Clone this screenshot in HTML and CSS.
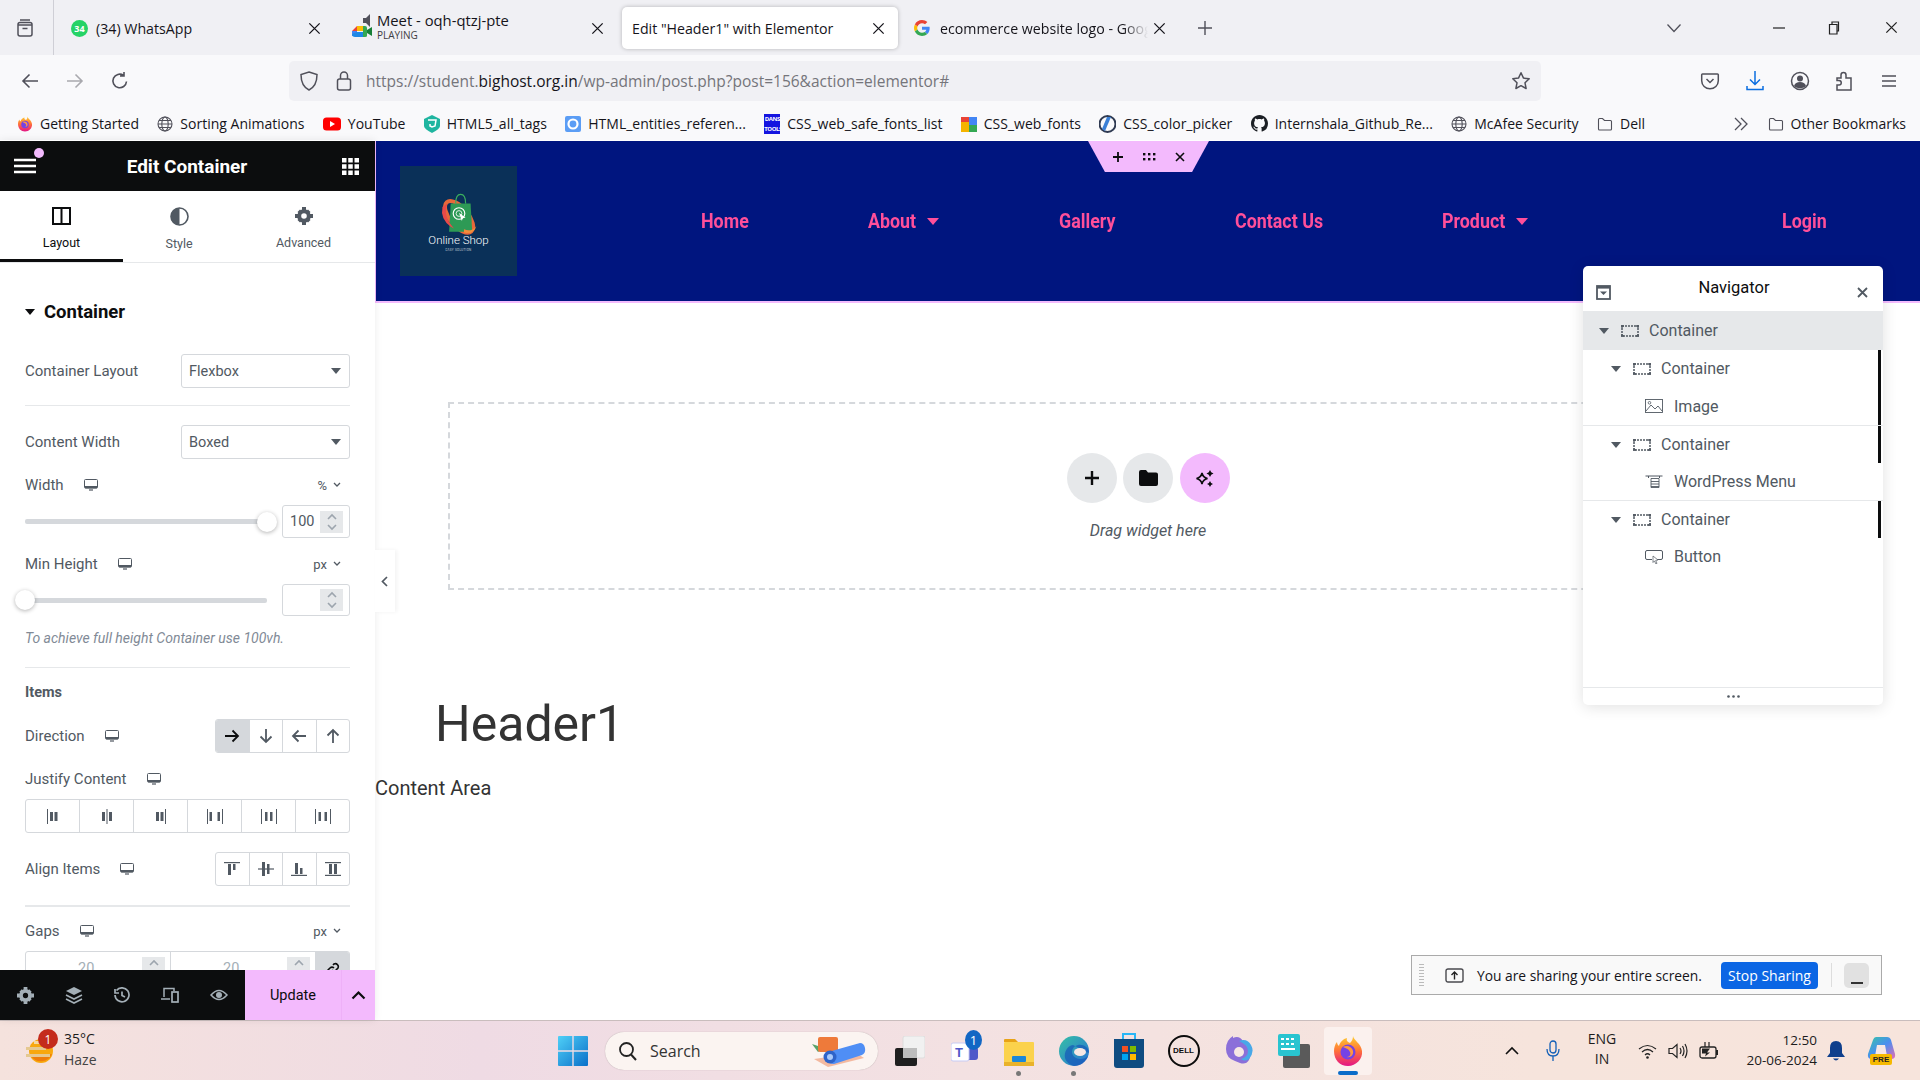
FILE: index.html
```html
<!DOCTYPE html>
<html lang="en">
<head>
<meta charset="utf-8">
<title>Edit "Header1" with Elementor</title>
<link rel="stylesheet" href="styles.css">
</head>
<body>
<svg class="defs" width="0" height="0">
  <symbol id="x" viewBox="0 0 16 16"><path d="M2.5 2.5l11 11M13.5 2.5l-11 11" fill="none" stroke="currentColor" stroke-width="1.4"/></symbol>
  <symbol id="globe" viewBox="0 0 16 16"><g fill="none" stroke="#50505a" stroke-width="1.1"><circle cx="8" cy="8" r="7"/><ellipse cx="8" cy="8" rx="3.2" ry="7"/><path d="M1 8h14M2 4.5h12M2 11.5h12"/></g></symbol>
  <symbol id="folder" viewBox="0 0 16 16"><path d="M1.5 13V3.5q0-1 1-1h3l2 2h6q1 0 1 1V13q0 1-1 1h-11q-1 0-1-1z" fill="none" stroke="#50505a" stroke-width="1.1"/></symbol>
  <symbol id="desk" viewBox="0 0 14 12"><rect x=".5" y=".5" width="13" height="8.6" rx="1" fill="none" stroke="#515962"/><rect x="1" y="7" width="12" height="2.2" fill="#515962"/><rect x="5" y="10.4" width="4" height="1.2" fill="#515962"/></symbol>
  <symbol id="ctr" viewBox="0 0 18 12"><rect x="1" y="1" width="16" height="10" fill="none" stroke="#515962" stroke-width="1.500" stroke-dasharray="2 1"/><path d="M0 1h3M15 1h3M0 11h3M15 11h3M1 0v3M17 0v3M1 12V9M17 12V9" stroke="#515962" stroke-width="1.300"/></symbol>
  <symbol id="ff" viewBox="0 0 32 32"><defs><linearGradient id="ffg" x1="0" y1="0" x2="0" y2="1"><stop offset="0" stop-color="#ffcf2e"/><stop offset=".5" stop-color="#ff7139"/><stop offset="1" stop-color="#e31587"/></linearGradient></defs><path d="M21 1c1 5 8 7 9 15 1 8-6 15-14 15S2 25 2 16c0-3 1-7 3-9 0 2 1 3 2 4 1-4 4-7 8-8-1 3 1 4 3 5 2-2 3-4 3-7z" fill="url(#ffg)"/><circle cx="16" cy="17" r="7.5" fill="#7542e5"/><path d="M11 12c3-2 9-1 10 4 1 4-3 7-6 6 3 0 4-3 3-5-1-3-5-4-7-5z" fill="#ff9640"/></symbol>
</svg>

<header class="tabbar">
  <div class="tb-view"><svg width="20" height="20" viewBox="0 0 20 20"><path d="M5 2h10M3 7h14M7.5 10.5h5" fill="none" stroke="#50505a" stroke-width="1.6"/><rect x="3" y="4.500" width="14" height="13.500" rx="2" fill="none" stroke="#50505a" stroke-width="1.5"/></svg></div>
  <div class="tab tab-wa">
    <span class="wa-ic">34</span><span class="tab-t">(34) WhatsApp</span>
    <svg class="tab-x"><use href="#x"/></svg>
  </div>
  <div class="tab tab-meet">
    <svg class="meet-ic" width="24" height="28" viewBox="0 0 24 28"><path d="M2 18l5-5h6v5H7v5H2z" fill="#ea4335"/><path d="M2 18h5v5H2z" fill="#4285f4"/><path d="M7 23h6v5H5q-3 0-3-3z" fill="#1e88e5" transform="translate(0 -4)"/><path d="M13 13h2q2 0 2 2v8q0 1-2 1h-2z" fill="#34a853"/><path d="M7 13h6v5H7z" fill="#fbbc04"/><path d="M17 17l5-3v9l-5-3z" fill="#188038"/><path d="M13 5h3l4-4v13l-4-4h-3z" fill="#50505a"/></svg>
    <div class="meet-t"><span class="tab-t meet-name">Meet - oqh-qtzj-pte</span><span class="playing">PLAYING</span></div>
    <svg class="tab-x"><use href="#x"/></svg>
  </div>
  <div class="tab tab-active">
    <span class="tab-t">Edit "Header1" with Elementor</span>
    <svg class="tab-x"><use href="#x"/></svg>
  </div>
  <div class="tab tab-g">
    <svg width="16" height="16" viewBox="0 0 48 48"><path fill="#ea4335" d="M24 9.5c3.5 0 6.700 1.200 9.200 3.600l6.900-6.900C35.900 2.400 30.500 0 24 0 14.600 0 6.500 5.400 2.600 13.200l8 6.200C12.500 13.700 17.800 9.500 24 9.500z"/><path fill="#4285f4" d="M47 24.500c0-1.600-.2-3.100-.4-4.500H24v9h13c-.6 3-2.300 5.500-4.800 7.200l7.700 6C44.400 38 47 31.800 47 24.500z"/><path fill="#fbbc05" d="M10.500 28.600c-.5-1.500-.8-3-.8-4.600s.3-3.100.8-4.600l-8-6.200C.9 16.500 0 20.100 0 24s.9 7.500 2.600 10.800z"/><path fill="#34a853" d="M24 48c6.500 0 11.900-2.100 15.900-5.800l-7.700-6c-2.200 1.400-4.900 2.300-8.200 2.300-6.200 0-11.500-4.200-13.400-9.900l-8 6.200C6.500 42.600 14.600 48 24 48z"/></svg>
    <span class="tab-t tab-fade">ecommerce website logo - Google</span>
    <svg class="tab-x"><use href="#x"/></svg>
  </div>
  <svg class="tab-plus" width="16" height="16" viewBox="0 0 16 16"><path d="M8 1v14M1 8h14" stroke="#50505a" stroke-width="1.4"/></svg>
  <svg class="tab-list" width="16" height="16" viewBox="0 0 16 16"><path d="M1.500 4.500L8 11.500l6.500-7" fill="none" stroke="#50505a" stroke-width="1.3"/></svg>
  <div class="win-btns">
    <svg width="14" height="14" viewBox="0 0 14 14"><path d="M1 7h12" stroke="#222" stroke-width="1.200"/></svg>
    <svg width="14" height="14" viewBox="0 0 14 14"><path d="M4 3V1h6.500v9H9M1.500 3.500H9V13H1.500z" fill="none" stroke="#222" stroke-width="1.200"/></svg>
    <svg width="15" height="15" viewBox="0 0 16 16"><use href="#x" color="#222"/></svg>
  </div>
</header>

<nav class="toolbar">
  <svg class="nb nb-back" width="20" height="20" viewBox="0 0 20 20"><path d="M18 10H3M9.500 3.500L3 10l6.500 6.500" fill="none" stroke="#50505a" stroke-width="1.600"/></svg>
  <svg class="nb nb-fwd" width="20" height="20" viewBox="0 0 20 20"><path d="M2 10h15M10.500 3.500L17 10l-6.500 6.500" fill="none" stroke="#a9a9ae" stroke-width="1.600"/></svg>
  <svg class="nb nb-rel" width="20" height="20" viewBox="0 0 20 20"><path d="M16.500 10.500a6.800 6.800 0 1 1-3-6.200M14 1v4h-4" fill="none" stroke="#50505a" stroke-width="1.600"/></svg>
  <div class="urlbar">
    <svg width="20" height="22" viewBox="0 0 20 22"><path d="M10 2l8 2.500c0 7-2 12.500-8 15.500C4 17 2 11.500 2 4.500z" fill="none" stroke="#50505a" stroke-width="1.500"/></svg>
    <svg class="lock" width="16" height="22" viewBox="0 0 16 22"><rect x="1.500" y="9" width="13" height="11" rx="2" fill="none" stroke="#50505a" stroke-width="1.500"/><path d="M4.500 9V5.500a3.500 3.500 0 0 1 7 0V9" fill="none" stroke="#50505a" stroke-width="1.500"/></svg>
    <span class="url">https://student.<b>bighost.org.in</b>/wp-admin/post.php?post=156&amp;action=elementor#</span>
    <svg class="star" width="20" height="20" viewBox="0 0 20 20"><path d="M10 1.800l2.500 5.300 5.700.7-4.200 4 1.100 5.700-5.100-2.800-5.100 2.800 1.100-5.700-4.200-4 5.700-.7z" fill="none" stroke="#50505a" stroke-width="1.500" stroke-linejoin="round"/></svg>
  </div>
  <div class="tb-right">
    <svg width="20" height="20" viewBox="0 0 20 20"><path d="M2.500 3h15q.8 0 .8.800v6a8.300 8 0 0 1-16.600 0v-6q0-.8.800-.8z" fill="none" stroke="#50505a" stroke-width="1.500"/><path d="M6.500 8l3.500 3.500L13.500 8" fill="none" stroke="#50505a" stroke-width="1.500"/></svg>
    <svg width="20" height="22" viewBox="0 0 20 22"><path d="M10 1v13M5 9.500l5 5 5-5" fill="none" stroke="#0b6ee0" stroke-width="1.500"/><path d="M2 16v3.500h16V16" fill="none" stroke="#0b6ee0" stroke-width="1.500"/></svg>
    <svg width="20" height="20" viewBox="0 0 20 20"><circle cx="10" cy="10" r="8.500" fill="none" stroke="#50505a" stroke-width="1.500"/><circle cx="10" cy="7.500" r="3" fill="#50505a"/><path d="M4 15c1-3 3-4 6-4s5 1 6 4c-3 3-9 3-12 0z" fill="#50505a"/></svg>
    <svg width="20" height="22" viewBox="0 0 20 22"><path d="M2 8h4V5a2.500 2.500 0 0 1 5 0v3h5v12H2v-5h2a2.200 2.200 0 0 0 0-4.500H2z" fill="none" stroke="#50505a" stroke-width="1.500"/></svg>
    <svg width="18" height="18" viewBox="0 0 18 18"><path d="M2 4h14M2 9h14M2 14h14" stroke="#50505a" stroke-width="1.500"/></svg>
  </div>
</nav>

<nav class="bookmarks">
  <span class="bm"><svg width="16" height="16"><use href="#ff"/></svg>Getting Started</span>
  <span class="bm"><svg width="16" height="16"><use href="#globe"/></svg>Sorting Animations</span>
  <span class="bm"><svg width="18" height="16" viewBox="0 0 18 16"><rect y="1.500" width="18" height="13" rx="3.500" fill="#f00"/><path d="M7 5l5 3-5 3z" fill="#fff"/></svg>YouTube</span>
  <span class="bm"><svg width="16" height="18" viewBox="0 0 16 18"><path d="M8 0l8 4v7q0 3-8 7-8-4-8-7V4z" fill="#1fb5a0"/><path d="M4 5h8l-1 6-3 1-2-1V9" fill="none" stroke="#fff" stroke-width="1.500"/></svg>HTML5_all_tags</span>
  <span class="bm"><svg width="16" height="16" viewBox="0 0 16 16"><rect width="16" height="16" rx="2" fill="#5b9df5"/><circle cx="8" cy="8" r="4.500" fill="none" stroke="#fff" stroke-width="2.200"/></svg>HTML_entities_referen...</span>
  <span class="bm"><span class="dans">DANS<br>TOOLS</span>CSS_web_safe_fonts_list</span>
  <span class="bm"><svg width="16" height="16" viewBox="0 0 16 16"><rect x="0" y="5" width="8" height="11" fill="#f4b400"/><rect x="0" y="1" width="8" height="5" fill="#ea4335"/><rect x="8" y="1" width="8" height="8" fill="#4285f4"/><rect x="8" y="9" width="8" height="7" fill="#34a853"/></svg>CSS_web_fonts</span>
  <span class="bm"><svg width="17" height="18" viewBox="0 0 17 18"><circle cx="8.500" cy="9" r="8" fill="none" stroke="#2f3a52" stroke-width="2"/><path d="M12 2L6 16l-3-2 5-12z" fill="#3a7fd6"/></svg>CSS_color_picker</span>
  <span class="bm"><svg width="17" height="17" viewBox="0 0 16 16"><path fill="#1b1f24" d="M8 0C3.580 0 0 3.580 0 8c0 3.540 2.290 6.530 5.470 7.590.4.070.55-.17.55-.38 0-.19-.01-.82-.01-1.490-2.010.37-2.530-.49-2.690-.94-.09-.23-.48-.94-.82-1.130-.28-.15-.68-.52-.01-.53.630-.01 1.080.58 1.230.82.720 1.210 1.870.87 2.330.66.070-.52.280-.87.510-1.070-1.780-.2-3.640-.89-3.640-3.950 0-.87.310-1.590.82-2.150-.08-.2-.36-1.020.08-2.120 0 0 .67-.21 2.200.82.640-.18 1.320-.27 2-.27s1.360.09 2 .27c1.530-1.040 2.200-.82 2.200-.82.440 1.100.16 1.920.08 2.120.51.560.82 1.270.82 2.150 0 3.070-1.870 3.750-3.650 3.950.290.250.54.730.54 1.480 0 1.070-.01 1.930-.01 2.200 0 .21.150.46.550.38A8.010 8.010 0 0 0 16 8c0-4.420-3.580-8-8-8z"/></svg>Internshala_Github_Re...</span>
  <span class="bm"><svg width="16" height="16"><use href="#globe"/></svg>McAfee Security</span>
  <span class="bm"><svg width="16" height="16"><use href="#folder"/></svg>Dell</span>
  <svg class="bm-more" width="16" height="14" viewBox="0 0 16 14"><path d="M2 1l6 6-6 6M8 1l6 6-6 6" fill="none" stroke="#50505a" stroke-width="1.300"/></svg>
  <span class="bm"><svg width="16" height="16"><use href="#folder"/></svg>Other Bookmarks</span>
</nav>

<main class="app">
  <aside class="panel">
    <div class="p-head">
      <span class="dot"></span>
      <svg width="22" height="16" viewBox="0 0 22 16"><path d="M0 2h22M0 8h22M0 14h22" stroke="#fff" stroke-width="2.600"/></svg>
      <h1>Edit Container</h1>
      <svg width="17" height="17" viewBox="0 0 17 17" fill="#fff"><rect width="4.500" height="4.500"/><rect x="6.250" width="4.500" height="4.500"/><rect x="12.500" width="4.500" height="4.500"/><rect y="6.250" width="4.500" height="4.500"/><rect x="6.250" y="6.250" width="4.500" height="4.500"/><rect x="12.500" y="6.250" width="4.500" height="4.500"/><rect y="12.500" width="4.500" height="4.500"/><rect x="6.250" y="12.500" width="4.500" height="4.500"/><rect x="12.500" y="12.500" width="4.500" height="4.500"/></svg>
    </div>
    <div class="p-tabs">
      <div class="p-tab p-tab-on">
        <svg width="19" height="18" viewBox="0 0 19 18"><path d="M1 1h17v16H1zM9.500 1v16" fill="none" stroke="#0c0d0e" stroke-width="2"/></svg>
        <span>Layout</span>
      </div>
      <div class="p-tab p-tab-style">
        <svg width="19" height="19" viewBox="0 0 19 19"><circle cx="9.500" cy="9.500" r="8.500" fill="none" stroke="#515962" stroke-width="1.600"/><path d="M9.500 1a8.500 8.500 0 0 0 0 17z" fill="#515962"/></svg>
        <span>Style</span>
      </div>
      <div class="p-tab p-tab-adv">
        <svg width="18" height="18" viewBox="0 0 18 18"><circle cx="9" cy="9" r="4.800" fill="none" stroke="#515962" stroke-width="4"/><path d="M7 0h4v3H7zM7 15h4v3H7zM0 7h3v4H0zM15 7h3v4h-3zM2.500 5l2.500-2.500 2 2L4.500 7zM13 15.500L15.500 13l-2-2L11 13.500zM2.500 13L5 15.500l2-2L4.500 11zM13 2.500L15.500 5l-2 2L11 4.500z" fill="#515962"/></svg>
        <span>Advanced</span>
      </div>
    </div>
    <div class="p-body">
      <div class="sec-title"><i class="caret caret-k"></i>Container</div>

      <div class="row r-sel1"><label>Container Layout</label><div class="select">Flexbox<i class="caret"></i></div></div>
      <hr class="sep sep1">
      <div class="row r-sel2"><label>Content Width</label><div class="select">Boxed<i class="caret"></i></div></div>

      <div class="row r-lab"><label>Width</label><svg class="desk"><use href="#desk"/></svg><span class="unit">%<svg width="8" height="6" viewBox="0 0 8 6"><path d="M1 1l3 3 3-3" fill="none" stroke="#515962" stroke-width="1.300"/></svg></span></div>
      <div class="row r-slide">
        <div class="track"><span class="thumb thumb-end"></span></div>
        <div class="num"><span>100</span><span class="spin"><svg width="12" height="18" viewBox="0 0 12 18"><path d="M2 6l4-4 4 4M2 12l4 4 4-4" fill="none" stroke="#9da5ae" stroke-width="1.600"/></svg></span></div>
      </div>

      <div class="row r-lab"><label>Min Height</label><svg class="desk"><use href="#desk"/></svg><span class="unit">px<svg width="8" height="6" viewBox="0 0 8 6"><path d="M1 1l3 3 3-3" fill="none" stroke="#515962" stroke-width="1.300"/></svg></span></div>
      <div class="row r-slide r-slide2">
        <div class="track"><span class="thumb thumb-start"></span></div>
        <div class="num"><span></span><span class="spin"><svg width="12" height="18" viewBox="0 0 12 18"><path d="M2 6l4-4 4 4M2 12l4 4 4-4" fill="none" stroke="#9da5ae" stroke-width="1.600"/></svg></span></div>
      </div>
      <p class="hint">To achieve full height Container use 100vh.</p>
      <hr class="sep sep2">
      <div class="items">Items</div>

      <div class="row r-dir"><label>Direction</label><svg class="desk"><use href="#desk"/></svg>
        <div class="btns">
          <span class="on"><svg width="16" height="14" viewBox="0 0 16 14"><path d="M1 7h13M8.500 1.500L14 7l-5.500 5.500" fill="none" stroke="#0c0d0e" stroke-width="1.800"/></svg></span>
          <span><svg width="14" height="16" viewBox="0 0 14 16"><path d="M7 1v13M1.500 8.500L7 14l5.500-5.500" fill="none" stroke="#515962" stroke-width="1.800"/></svg></span>
          <span><svg width="16" height="14" viewBox="0 0 16 14"><path d="M15 7H2M7.500 1.500L2 7l5.500 5.500" fill="none" stroke="#515962" stroke-width="1.800"/></svg></span>
          <span><svg width="14" height="16" viewBox="0 0 14 16"><path d="M7 15V2M1.500 7.500L7 2l5.500 5.500" fill="none" stroke="#515962" stroke-width="1.800"/></svg></span>
        </div>
      </div>
      <div class="row r-lab"><label>Justify Content</label><svg class="desk"><use href="#desk"/></svg></div>
      <div class="btns btns-wide">
        <span><svg width="18" height="15" viewBox="0 0 18 15" fill="#515962"><rect x="3" width="1" height="15"/><rect x="6" y="3" width="3" height="9"/><rect x="10.500" y="3" width="3" height="9"/></svg></span>
        <span><svg width="18" height="15" viewBox="0 0 18 15" fill="#515962"><rect x="4" y="3" width="3" height="9"/><rect x="8.500" width="1" height="15"/><rect x="11" y="3" width="3" height="9"/></svg></span>
        <span><svg width="18" height="15" viewBox="0 0 18 15" fill="#515962"><rect x="4" y="3" width="3" height="9"/><rect x="8.500" y="3" width="3" height="9"/><rect x="13" width="1" height="15"/></svg></span>
        <span><svg width="18" height="15" viewBox="0 0 18 15" fill="#515962"><rect x="1" width="1" height="15"/><rect x="3.500" y="3" width="2.500" height="9"/><rect x="11.500" y="3" width="2.500" height="9"/><rect x="16" width="1" height="15"/></svg></span>
        <span><svg width="18" height="15" viewBox="0 0 18 15" fill="#515962"><rect x="1" width="1" height="15"/><rect x="5" y="3" width="2.500" height="9"/><rect x="10" y="3" width="2.500" height="9"/><rect x="16" width="1" height="15"/></svg></span>
        <span><svg width="18" height="15" viewBox="0 0 18 15" fill="#515962"><rect x="1" width="1" height="15"/><rect x="4.500" y="3" width="2.500" height="9"/><rect x="10.500" y="3" width="2.500" height="9"/><rect x="16" width="1" height="15"/></svg></span>
      </div>
      <div class="row r-align"><label>Align Items</label><svg class="desk"><use href="#desk"/></svg>
        <div class="btns">
          <span><svg width="16" height="14" viewBox="0 0 16 14" fill="#515962"><rect width="16" height="1.200"/><rect x="4" y="2" width="3" height="11"/><rect x="9" y="2" width="2.500" height="6"/></svg></span>
          <span><svg width="16" height="14" viewBox="0 0 16 14" fill="#515962"><rect y="6.400" width="16" height="1.200"/><rect x="4" width="3" height="14"/><rect x="9" y="2" width="2.500" height="10"/></svg></span>
          <span><svg width="16" height="14" viewBox="0 0 16 14" fill="#515962"><rect y="12.800" width="16" height="1.200"/><rect x="4" y="1" width="3" height="11"/><rect x="9" y="6" width="2.500" height="6"/></svg></span>
          <span><svg width="16" height="14" viewBox="0 0 16 14" fill="#515962"><rect width="16" height="1.200"/><rect y="12.800" width="16" height="1.200"/><rect x="4" y="2" width="3" height="10"/><rect x="9" y="2" width="3" height="10"/></svg></span>
        </div>
      </div>
      <hr class="sep sep3">
      <div class="row r-lab r-gaps"><label>Gaps</label><svg class="desk"><use href="#desk"/></svg><span class="unit">px<svg width="8" height="6" viewBox="0 0 8 6"><path d="M1 1l3 3 3-3" fill="none" stroke="#515962" stroke-width="1.300"/></svg></span></div>
      <div class="gaps">
        <div class="gap"><span>20</span><i class="mini"><svg width="12" height="8" viewBox="0 0 12 8"><path d="M2 6l4-4 4 4" fill="none" stroke="#9da5ae" stroke-width="1.600"/></svg></i></div>
        <div class="gap"><span>20</span><i class="mini"><svg width="12" height="8" viewBox="0 0 12 8"><path d="M2 6l4-4 4 4" fill="none" stroke="#9da5ae" stroke-width="1.600"/></svg></i></div>
        <div class="link"><svg width="14" height="14" viewBox="0 0 14 14"><path d="M6 8a3 3 0 0 0 4 0l2-2a3 3 0 0 0-4-4L7 3M8 6a3 3 0 0 0-4 0l-2 2a3 3 0 0 0 4 4l1-1" fill="none" stroke="#0c0d0e" stroke-width="1.600"/></svg></div>
      </div>
    </div>
    <div class="p-foot">
      <div class="f-ics">
        <svg width="17" height="17" viewBox="0 0 18 18"><circle cx="9" cy="9" r="4.800" fill="none" stroke="#a4afb7" stroke-width="4"/><path d="M7 0h4v3H7zM7 15h4v3H7zM0 7h3v4H0zM15 7h3v4h-3zM2.500 5l2.500-2.500 2 2L4.500 7zM13 15.500L15.500 13l-2-2L11 13.500zM2.500 13L5 15.500l2-2L4.500 11zM13 2.500L15.500 5l-2 2L11 4.500z" fill="#a4afb7"/></svg>
        <svg width="18" height="18" viewBox="0 0 18 18"><path d="M9 1l8 4-8 4-8-4z" fill="#a4afb7"/><path d="M1 9l8 4 8-4M1 13l8 4 8-4" fill="none" stroke="#a4afb7" stroke-width="1.600"/></svg>
        <svg width="16" height="16" viewBox="0 0 16 16"><path d="M2.500 3.500A7 7 0 1 1 1 8M1 2v4h4" fill="none" stroke="#a4afb7" stroke-width="1.700"/><path d="M8 4.500V8.500l3 1.500" fill="none" stroke="#a4afb7" stroke-width="1.700"/></svg>
        <svg width="18" height="16" viewBox="0 0 18 16"><path d="M3 10V1.500h10V4M0 12h9" fill="none" stroke="#a4afb7" stroke-width="1.500"/><rect x="11" y="5" width="6" height="10" fill="none" stroke="#a4afb7" stroke-width="1.700"/></svg>
        <svg width="18" height="12" viewBox="0 0 18 12"><path d="M1 6q8-9 16 0-8 9-16 0z" fill="none" stroke="#a4afb7" stroke-width="1.500"/><circle cx="9" cy="6" r="3" fill="#a4afb7"/></svg>
      </div>
      <div class="f-up">Update</div>
      <div class="f-ar"><svg width="15" height="10" viewBox="0 0 15 10"><path d="M1.500 8.500l6-6 6 6" fill="none" stroke="#0c0d0e" stroke-width="2.200"/></svg></div>
    </div>
    <div class="collapse"><svg width="7" height="11" viewBox="0 0 7 11"><path d="M6 1L1.500 5.500 6 10" fill="none" stroke="#515962" stroke-width="1.700"/></svg></div>
  </aside>

  <section class="canvas">
    <div class="site-head">
      <div class="handle">
        <svg width="12" height="12" viewBox="0 0 12 12"><path d="M6 1v10M1 6h10" stroke="#0c0d0e" stroke-width="1.800"/></svg>
        <svg width="14" height="10" viewBox="0 0 14 10" fill="#0c0d0e"><rect x="1" y="1" width="2.400" height="2.400"/><rect x="6" y="1" width="2.400" height="2.400"/><rect x="11" y="1" width="2.400" height="2.400"/><rect x="1" y="6" width="2.400" height="2.400"/><rect x="6" y="6" width="2.400" height="2.400"/><rect x="11" y="6" width="2.400" height="2.400"/></svg>
        <svg width="12" height="12" viewBox="0 0 12 12"><path d="M2 2l8 8M10 2l-8 8" stroke="#0c0d0e" stroke-width="1.600"/></svg>
      </div>
      <div class="logo">
        <svg width="40" height="43" viewBox="0 0 48 52">
          <ellipse cx="24" cy="30" rx="23" ry="11" transform="rotate(50 24 30)" fill="none" stroke="#e8683a" stroke-width="5"/>
          <path d="M14 14h24l2 34H12z" fill="#2d9a55"/><path d="M20 14q0-11 6-11t6 11" fill="none" stroke="#3aaf5e" stroke-width="1.500"/>
          <path d="M4 18q-3 14 10 24l4 2q-14-14-8-30z" fill="#e84a4a"/><path d="M30 49q12 3 15-8-6 8-15 4z" fill="#f28c3a"/>
          <circle cx="24" cy="26" r="7" fill="none" stroke="#fff" stroke-width="1.400"/><circle cx="24" cy="26" r="3.500" fill="none" stroke="#fff"/><path d="M24 25l8 6-3.500.5-1 3.500z" fill="#fff"/>
        </svg>
        <span class="logo-a">Online Shop</span>
        <span class="logo-b">EASY SOLUTION</span>
      </div>
      <ul class="menu">
        <li><span class="mt w47">Home</span></li>
        <li><span class="mt w48">About</span><i class="m-caret"></i></li>
        <li><span class="mt w56">Gallery</span></li>
        <li><span class="mt w87">Contact Us</span></li>
        <li><span class="mt w63">Product</span><i class="m-caret"></i></li>
      </ul>
      <span class="mt w47 login">Login</span>
    </div>

    <div class="drop">
      <div class="drop-btns">
        <span class="circ"><svg width="16" height="16" viewBox="0 0 16 16"><path d="M8 1v14M1 8h14" stroke="#0c0d0e" stroke-width="2.400"/></svg></span>
        <span class="circ"><svg width="19" height="16" viewBox="0 0 19 16"><path d="M0 2q0-2 2-2h5l2 2.500h8q2 0 2 2V14q0 2-2 2H2q-2 0-2-2z" fill="#0c0d0e"/></svg></span>
        <span class="circ circ-ai"><svg width="19" height="19" viewBox="0 0 19 19"><path d="M7 4q1 4.500 5.500 5.500Q8 10.500 7 15q-1-4.500-5.500-5.500Q6 8.500 7 4z" fill="none" stroke="#0c0d0e" stroke-width="1.600"/><path d="M15 1l1.200 2.300L18.500 4.500 16.200 5.700 15 8l-1.200-2.300L11.500 4.500l2.300-1.200zM15 12l1.100 2 1.900 1-1.900 1.100L15 18l-1.100-1.900L12 15l1.900-1z" fill="#0c0d0e"/></svg></span>
      </div>
      <div class="drag">Drag widget here</div>
    </div>

    <h2 class="h1">Header1</h2>
    <p class="content-area">Content Area</p>

    <div class="navigator">
      <div class="nv-head">
        <svg width="15" height="15" viewBox="0 0 15 15"><rect x="1" y="1" width="13" height="13" fill="none" stroke="#515962" stroke-width="1.800"/><rect x="1" y="1" width="13" height="2.600" fill="#515962"/><path d="M4 6.500h7l-3.500 3.500z" fill="#515962"/></svg>
        <span class="nv-title">Navigator</span>
        <svg width="11" height="11" viewBox="0 0 11 11"><path d="M1 1l9 9M10 1l-9 9" stroke="#515962" stroke-width="1.800"/></svg>
      </div>
      <div class="nv-row nv-top"><i class="caret"></i><svg class="nv-ic"><use href="#ctr"/></svg>Container</div>
      <div class="nv-group nv-g1">
        <div class="nv-row"><i class="caret"></i><svg class="nv-ic"><use href="#ctr"/></svg>Container</div>
        <div class="nv-row nv-leaf"><svg class="nv-lic" viewBox="0 0 18 14"><rect x=".5" y=".5" width="17" height="13" fill="none" stroke="#515962" stroke-width=".9"/><path d="M1 12l5-6 4 4 3-3 4 5" fill="none" stroke="#515962" stroke-width=".9"/><circle cx="4.500" cy="3.800" r="1.300" fill="none" stroke="#515962" stroke-width=".8"/></svg>Image</div>
      </div>
      <div class="nv-group nv-g2">
        <div class="nv-row"><i class="caret"></i><svg class="nv-ic"><use href="#ctr"/></svg>Container</div>
        <div class="nv-row nv-leaf"><svg class="nv-lic" viewBox="0 0 18 14"><path d="M.5 1h17M3.500 1v2M14.500 1v2" stroke="#515962"/><path d="M6 3.500h8M6 6.500h8M6 9h8M6 11.500h8M6 3.500v9h8v-9" fill="none" stroke="#515962" stroke-width=".9"/></svg>WordPress Menu</div>
      </div>
      <div class="nv-group nv-g3">
        <div class="nv-row"><i class="caret"></i><svg class="nv-ic"><use href="#ctr"/></svg>Container</div>
        <div class="nv-row nv-leaf"><svg class="nv-lic" viewBox="0 0 18 14"><path d="M7 9.500H2q-1.500 0-1.500-1.500V2Q.5.500 2 .5h14q1.500 0 1.500 1.500v6q0 1.500-1.500 1.500h-4" fill="none" stroke="#515962"/><path d="M8 6l5 4-2.300.4 1.300 3-1.200.5-1.300-3L8 12.500z" fill="#fff" stroke="#515962" stroke-width=".7"/></svg>Button</div>
      </div>
      <div class="nv-foot"><svg width="13" height="3" viewBox="0 0 13 3" fill="#515962"><circle cx="1.500" cy="1.500" r="1.300"/><circle cx="6.500" cy="1.500" r="1.300"/><circle cx="11.500" cy="1.500" r="1.300"/></svg></div>
    </div>

    <div class="sharebar">
      <span class="grip"></span>
      <svg width="19" height="15" viewBox="0 0 19 15"><rect x="1" y="1" width="17" height="13" rx="2" fill="none" stroke="#4a4a4f" stroke-width="1.400"/><path d="M9.500 11.500V4.500M6.500 7l3-3 3 3" fill="none" stroke="#222" stroke-width="1.400"/></svg>
      <span class="share-t">You are sharing your entire screen.</span>
      <span class="stop">Stop Sharing</span>
      <span class="share-d"></span>
      <span class="share-min"><i></i></span>
    </div>
  </section>
</main>

<footer class="taskbar">
  <div class="weather">
    <svg width="28" height="30" viewBox="0 0 28 30"><circle cx="15" cy="15" r="12" fill="#f8a80e"/><path d="M5 20a12 12 0 0 0 21-2z" fill="#ef7d0c"/><rect x="0" y="11" width="20" height="3" fill="#e5c890"/><rect x="0" y="18" width="24" height="3" fill="#e5c890"/><rect x="8" y="5" width="12" height="3" fill="#f5d9a0"/></svg>
    <span class="badge">1</span>
    <div class="w-t"><span>35°C</span><span class="w-h">Haze</span></div>
  </div>
  <div class="tb-center">
    <svg class="win" width="30" height="30" viewBox="0 0 30 30"><defs><linearGradient id="wg" x1="0" y1="0" x2="1" y2="1"><stop offset="0" stop-color="#4fd0f7"/><stop offset="1" stop-color="#0a6fc9"/></linearGradient></defs><path d="M0 1q0-1 1-1h13.300v14.300H0zM15.700 0H29q1 0 1 1v13.300H15.700zM0 15.700h14.300V30H1q-1 0-1-1zM15.700 15.700H30V29q0 1-1 1H15.700z" fill="url(#wg)"/></svg>
    <div class="search">
      <svg width="20" height="20" viewBox="0 0 20 20"><circle cx="8.500" cy="8.500" r="6.500" fill="none" stroke="#222" stroke-width="1.800"/><path d="M13 13.500l5 5.500" stroke="#222" stroke-width="2"/></svg>
      <span>Search</span>
      <svg class="s-art" width="58" height="34" viewBox="0 0 58 34"><path d="M4 10l6 8 6-4z" fill="#59a36a"/><rect x="10" y="3" width="20" height="15" rx="2" fill="#ee7a3a"/><path d="M6 25l42-6 8 5-36 9z" fill="#f3b9a0"/><path d="M20 18l32-9q4 0 5 5t-3 7l-28 9q-6 0-7-5t1-7z" fill="#4f8ef5"/><circle cx="22" cy="23" r="6.500" fill="#2e63c9"/><circle cx="22" cy="23" r="3" fill="#a9c9fb"/></svg>
    </div>
    <svg class="tv" width="30" height="30" viewBox="0 0 30 30"><rect x="8" y="0" width="22" height="22" rx="2" fill="#f1f1f1" stroke="#ddd"/><rect x="0" y="12" width="22" height="18" rx="2" fill="#1f1f1f"/><rect x="8" y="12" width="14" height="10" fill="#bdbdbd"/></svg>
    <div class="app-ic teams"><svg width="28" height="26" viewBox="0 0 28 26"><circle cx="20" cy="6" r="4" fill="#7b83eb"/><rect x="12" y="9" width="15" height="13" rx="3" fill="#5059c9"/><rect x="0" y="5" width="18" height="18" rx="2" fill="#fff" stroke="#c8cbf4"/><text x="4" y="19" class="t-t">T</text></svg><span class="t-badge">1</span></div>
    <div class="app-ic"><svg width="30" height="30" viewBox="0 0 30 30"><path d="M0 4q0-1 1-1h10l3 3h-14z" fill="#e8a317"/><rect y="6" width="30" height="24" rx="1" fill="#fbd24c"/><rect y="26" width="30" height="4" fill="#e9b22a"/><rect x="8" y="20" width="14" height="6" rx="1" fill="#1a87d8"/></svg><u></u></div>
    <div class="app-ic"><svg width="30" height="30" viewBox="0 0 30 30"><defs><linearGradient id="eg" x1="0" y1="0" x2="1" y2="1"><stop offset="0" stop-color="#35c1a5"/><stop offset="1" stop-color="#2a6fd6"/></linearGradient></defs><circle cx="15" cy="15" r="15" fill="url(#eg)"/><path d="M30 17c0-6-6-9-11-8-4 1-6 4-6 7s3 7 8 7c4 0 6-1 8-3-2 6-8 10-13 10-4 0-9-4-10-8-1-6 2-12 8-13" fill="#1558b8" opacity=".7"/><ellipse cx="21" cy="16" rx="6" ry="4" fill="#f6e7e4"/></svg><u></u></div>
    <div class="app-ic"><svg width="30" height="36" viewBox="0 0 30 36"><path d="M9 6V1h12v5" fill="none" stroke="#29b6f6" stroke-width="2"/><path d="M0 6h30v26q0 3-3 3H3q-3 0-3-3z" fill="#0f4c81"/><rect x="8" y="13" width="6" height="6" fill="#f25022"/><rect x="16" y="13" width="6" height="6" fill="#7fba00"/><rect x="8" y="21" width="6" height="6" fill="#00a4ef"/><rect x="16" y="21" width="6" height="6" fill="#ffb900"/></svg></div>
    <div class="dell"><span>DELL</span></div>
    <div class="app-ic"><svg width="28" height="30" viewBox="0 0 28 30"><path d="M8 2q6-3 10 3l6 8q3 5 0 11-3 5-9 3l-5-2q-9-3-9-12t7-13z" fill="#8b6fd9"/><path d="M14 5q8-3 12 4t-2 14q-4 3-8 0 7-2 7-8t-9-10z" fill="#48a8e8"/><circle cx="14" cy="16" r="5" fill="#f6e7e4"/></svg></div>
    <div class="app-ic"><svg width="32" height="34" viewBox="0 0 32 34"><rect x="5" y="10" width="27" height="24" rx="2" fill="#5a5a5a"/><rect y="0" width="22" height="22" rx="2" fill="#29c4d0"/><g fill="#fff"><rect x="3" y="4" width="3" height="2"/><rect x="8" y="4" width="3" height="2"/><rect x="13" y="4" width="3" height="2"/><rect x="3" y="9" width="3" height="2"/><rect x="8" y="9" width="3" height="2"/><rect x="13" y="9" width="3" height="2"/><rect x="3" y="14" width="14" height="2"/></g></svg></div>
    <div class="app-ic ff-on"><svg width="32" height="32"><use href="#ff"/></svg><b></b></div>
  </div>
  <div class="tray">
    <svg class="tr-up" width="14" height="9" viewBox="0 0 14 9"><path d="M1 8l6-6 6 6" fill="none" stroke="#111" stroke-width="1.600"/></svg>
    <svg class="tr-mic" width="14" height="22" viewBox="0 0 14 22"><rect x="4" y="1" width="6" height="12" rx="3" fill="none" stroke="#1360b8" stroke-width="1.300"/><path d="M1 9q0 7 6 7t6-7M7 16v5" fill="none" stroke="#1360b8" stroke-width="1.300"/></svg>
    <div class="tr-lang"><span>ENG</span><span>IN</span></div>
    <svg class="tr-wifi" width="19" height="16" viewBox="0 0 19 16"><path d="M1 6q8.500-7 17 0M4 9q5.500-5 11 0M7 12q2.500-2.500 5 0" fill="none" stroke="#222" stroke-width="1.200"/><circle cx="9.500" cy="14.500" r="1.300" fill="#222"/></svg>
    <svg class="tr-vol" width="20" height="16" viewBox="0 0 20 16"><path d="M1 5.500h3.500L9 1.500v13l-4.500-4H1z" fill="none" stroke="#222" stroke-width="1.200"/><path d="M12 5q2 3 0 6M14.500 3q3 5 0 10M17 1q4 7 0 14" fill="none" stroke="#222" stroke-width="1.200"/></svg>
    <svg class="tr-bat" width="20" height="20" viewBox="0 0 20 20"><rect x="1" y="6" width="16" height="11" rx="2" fill="none" stroke="#222" stroke-width="1.300"/><rect x="17" y="9" width="2" height="5" fill="#222"/><path d="M3 7.500h8l-3 4h3l-5 4 1-3H3z" fill="#222"/><path d="M6 1v5M10 1v5" stroke="#222" stroke-width="1.200"/></svg>
    <div class="clock"><span>12:50</span><span>20-06-2024</span></div>
    <svg class="tr-bell" width="18" height="22" viewBox="0 0 18 22"><path d="M9 1q-6 0-6 7v5l-3 4h18l-3-4V8q0-7-6-7zM6 18.500q3 4 6 0z" fill="#0f3f8c"/></svg>
    <div class="copilot"><svg width="30" height="24" viewBox="0 0 30 24"><defs><linearGradient id="cg" x1="0" y1="0" x2="1" y2="1"><stop offset="0" stop-color="#36c5a5"/><stop offset=".5" stop-color="#4a8ef0"/><stop offset="1" stop-color="#e86bb5"/></linearGradient></defs><path d="M10 1h11q3 0 4 3l4 14q1 5-4 5H6q-5 0-4-5L7 4q1-3 3-3z" fill="url(#cg)"/><path d="M11 9h8l2 11H9z" fill="#f6e7e4"/></svg><span>PRE</span></div>
  </div>
</footer>
</body>
</html>
```
FILE: styles.css
```css
* { box-sizing: border-box; }
html, body { margin: 0; padding: 0; height: 100%; }
body {
  width: 1920px; height: 1080px; overflow: hidden;
  display: flex; flex-direction: column;
  font-family: Roboto, "Noto Sans", sans-serif; color: #515962; background: #fff;
}
.defs { position: absolute; }
svg { display: block; flex: none; }
i, u { display: block; text-decoration: none; }

/* tab strip */
.tabbar {
  height: 55px; flex: none; background: #f0f0f4; display: flex; align-items: center;
  font: 14.2px "Open Sans", "Noto Sans", sans-serif; color: #15141a;
}
.tb-view { width: 54px; height: 55px; padding: 18px 0 0 15px; position: relative; }
.tb-view::after { content: ""; position: absolute; left: 53px; top: 0; height: 55px; width: 1px; background: #cfcfd6; }
.tab { height: 42px; display: flex; align-items: center; flex: none; position: relative; padding-top: 1px; }
.tab-x { width: 15px; height: 15px; color: #15141a; position: absolute; right: 12px; top: 14px; }
.tab-wa { width: 279px; padding-left: 17px; }
.tab-wa .tab-x { right: 11px; }
.wa-ic {
  width: 17px; height: 17px; border-radius: 50%; background: #25d366; color: #fff;
  font-size: 9px; font-weight: 700; display: flex; align-items: center; justify-content: center; margin-right: 8px;
}
.tab-meet { width: 289px; padding-left: 17px; }
.tab-meet .tab-x { right: 17px; }
.meet-ic { margin-right: 3px; margin-top: -2px; }
.meet-t { display: flex; flex-direction: column; line-height: 17px; margin-top: -2px; }
.meet-name { font-size: 14.8px; }
.playing { font-size: 10px; line-height: 13px; color: #3e3e44; }
.tab-active { width: 276px; padding-left: 10px; background: #fff; border-radius: 5px; box-shadow: 0 0 4px rgba(0,0,0,.25); }
.tab-active .tab-t { white-space: nowrap; }
.tab-g { width: 279px; padding-left: 16px; overflow: hidden; }
.tab-g .tab-x { right: 10px; }
.tab-fade {
  margin-left: 10px; width: 208px; overflow: hidden; white-space: nowrap;
  -webkit-mask-image: linear-gradient(90deg, #000 88%, transparent); mask-image: linear-gradient(90deg, #000 88%, transparent);
}
.tab-plus { margin-left: 20px; }
.tab-list { margin-left: 453px; }
.win-btns { margin-left: auto; display: flex; gap: 42px; padding-right: 21px; align-items: center; }

/* nav toolbar */
.toolbar { height: 52px; flex: none; background: #f9f9fb; display: flex; align-items: center; padding-left: 20px; }
.nb { margin-right: 25px; }
.nb-rel { margin-right: 0; }
.urlbar {
  width: 1252px; height: 40px; margin-left: 159px;
  background: #f0f0f4; border-radius: 5px; display: flex; align-items: center; padding-left: 10px;
}
.lock { margin-left: 17px; }
.url { margin-left: 14px; font: 15.5px "Open Sans", "Noto Sans", sans-serif; color: #75757b; white-space: nowrap; }
.url b { font-weight: 400; color: #15141a; }
.star { margin-left: auto; margin-right: 10px; }
.tb-right { margin-left: 159px; display: flex; align-items: center; gap: 25px; }

/* bookmarks */
.bookmarks {
  height: 33px; flex: none; background: #f9f9fb; display: flex; align-items: center; padding: 0 14px 0 17px;
  font: 14px "Open Sans", "Noto Sans", sans-serif; color: #15141a; white-space: nowrap; gap: 18.4px;
}
.bm { display: flex; align-items: center; gap: 7px; }
.dans { width: 16px; height: 20px; background: #1414e0; color: #fff; font-size: 6px; line-height: 10px; font-weight: 700; display: block; text-align: center; overflow: hidden; letter-spacing: -.4px; }
.bm-more { margin-left: auto; }

/* app */
.app { height: 880px; flex: none; display: flex; position: relative; }
.panel {
  width: 375px; flex: none; display: flex; flex-direction: column; background: #fff; position: relative;
  box-shadow: 0 0 8px rgba(0,0,0,.08); z-index: 2;
}
.p-head {
  height: 50px; flex: none; margin-top: 1px; background: #0c0d0e; color: #fff; display: flex; align-items: center;
  justify-content: space-between; padding: 0 16px 0 14px; position: relative;
}
.p-head h1 { margin: 0; font-size: 19px; font-weight: 700; position: relative; left: -2px; }
.dot { position: absolute; left: 34px; top: 7px; width: 10px; height: 10px; border-radius: 50%; background: #f3bafd; }
.p-tabs { height: 72px; flex: none; display: flex; border-bottom: 1px solid #e6e8ea; font-size: 12.5px; }
.p-tab { display: flex; flex-direction: column; align-items: center; padding-top: 16px; gap: 10px; }
.p-tab-on { width: 123px; color: #0c0d0e; border-bottom: 3px solid #0c0d0e; height: 71px; }
.p-tab-style { width: 110px; margin-left: 1px; }
.p-tab-adv { width: 141px; padding-right: 2px; }

.p-body { flex: 1; min-height: 0; overflow: hidden; padding: 37px 25px 0; font-size: 15px; }
.sec-title { height: 24px; display: flex; align-items: center; gap: 9px; font-size: 18.5px; font-weight: 700; color: #0c0d0e; }
.caret { width: 0; height: 0; border: 5.5px solid transparent; border-top: 6px solid #515962; border-bottom: 0; flex: none; }
.caret-k { border-top-color: #0c0d0e; }
.row { display: flex; align-items: center; }
label { white-space: nowrap; }
.select {
  margin-left: auto; width: 169px; height: 34px; border: 1px solid #d5d8dc; border-radius: 3px; display: flex;
  align-items: center; justify-content: space-between; padding: 0 8px 0 7px; font-size: 14.5px;
}
.r-sel1 { margin-top: 30px; }
.r-sel2 { margin-top: 19px; }
.sep { border: 0; margin: 0; height: 1px; background: #e6e8ea; }
.sep1 { margin-top: 17px; }
.sep2 { margin-top: 19px; }
.sep3 { margin-top: 19px; height: 2px; }
.r-lab { height: 20px; margin-top: 16px; }
.desk { width: 14px; height: 12px; margin-left: 20px; }
.unit { margin-left: auto; font-size: 13px; display: flex; align-items: center; gap: 6px; padding-right: 9px; }
.r-slide { margin-top: 10px; height: 33px; justify-content: space-between; }
.r-slide2 { height: 32px; }
.track { width: 242px; height: 5px; background: #d5d8dc; border-radius: 2px; position: relative; }
.thumb {
  position: absolute; top: -7.500px; width: 20px; height: 20px; border-radius: 50%; background: #fff;
  box-shadow: 0 1px 4px rgba(0,0,0,.3);
}
.thumb-end { right: -10px; }
.thumb-start { left: -10px; }
.num {
  width: 68px; height: 100%; border: 1px solid #d5d8dc; border-radius: 3px; display: flex; align-items: center;
  justify-content: space-between; padding: 0 6px 0 7px; font-size: 14.500px;
}
.spin { width: 23px; height: 22px; background: #e6e8ea; display: flex; align-items: center; justify-content: center; }
.hint { margin: 12px 0 0; height: 20px; line-height: 20px; font-size: 14px; font-style: italic; color: #818a96; white-space: nowrap; }
.items { margin-top: 15px; height: 20px; line-height: 20px; font-size: 14.500px; font-weight: 700; }
.r-dir { margin-top: 16px; }
.r-align { margin-top: 19px; }
.btns {
  margin-left: auto; width: 135px; height: 34px; border: 1px solid #d5d8dc; border-radius: 3px; display: flex; overflow: hidden;
}
.btns span { flex: 1; display: flex; align-items: center; justify-content: center; border-left: 1px solid #d5d8dc; }
.btns span:first-child { border-left: 0; }
.btns span.on { background: #d5d8dc; }
.btns-wide { width: 325px; margin-top: 10px; }
.r-gaps { margin-top: 14px; }
.gaps {
  margin-top: 10px; height: 34px; display: flex; border: 1px solid #d5d8dc; border-radius: 3px; overflow: hidden;
  font-size: 14.500px; color: #a4afb7;
}
.gap { width: 145px; display: flex; justify-content: space-between; padding: 5px 5px 0 52px; border-right: 1px solid #d5d8dc; }
.gap span { margin-top: 3px; }
.mini { width: 23px; height: 22px; background: #e6e8ea; display: flex; justify-content: center; padding-top: 2px; }
.link { flex: 1; background: #d5d8dc; display: flex; justify-content: center; padding-top: 10px; }
.p-foot { height: 50px; flex: none; background: #0c0d0e; display: flex; }
.f-ics { width: 245px; display: flex; align-items: center; justify-content: space-around; padding: 0 1px; }
.f-up { width: 96px; background: #f3bafd; color: #0c0d0e; display: flex; align-items: center; justify-content: center; font-size: 14.500px; }
.f-ar { flex: 1; background: #f3bafd; border-left: 1px solid #eeb0f8; display: flex; align-items: center; justify-content: center; }
.collapse {
  position: absolute; left: 100%; top: 410px; width: 20px; height: 62px; background: #fff;
  box-shadow: 2px 0 4px rgba(0,0,0,.05); display: flex; align-items: center; padding-left: 6px;
}

/* canvas */
.canvas { flex: 1; min-width: 0; position: relative; background: #fff; }
.site-head {
  height: 162px; margin-top: 1px; background: #00157f; border: 0 solid #f3bafd; border-left-width: 1px; border-bottom-width: 2px;
  display: flex; align-items: center; padding-left: 24px; position: relative;
  font: 700 21px Roboto, sans-serif; color: #ff4f9a;
}
.handle {
  position: absolute; left: 712px; top: 0; width: 121px; height: 31px; background: #f3bafd;
  clip-path: polygon(0 0, 100% 0, 86% 100%, 14% 100%);
  display: flex; align-items: center; justify-content: center; gap: 18px;
}
.logo {
  width: 117px; height: 110px; background: #0a3058; display: flex; flex-direction: column; align-items: center;
  padding-top: 26px; color: #fff; font-weight: 300;
}
.logo-a { font-size: 11.500px; line-height: 14px; margin-top: -2px; }
.logo-b { font-size: 3px; line-height: 6px; letter-spacing: .3px; }
.menu { list-style: none; margin: 0 0 0 184px; padding: 0; display: flex; gap: 120px; }
.menu li { display: flex; align-items: center; }
.mt { display: block; white-space: nowrap; transform: scaleX(.85); transform-origin: 0 50%; }
.w47 { width: 47px; }
.w48 { width: 48px; }
.w56 { width: 56px; }
.w63 { width: 63px; }
.w87 { width: 87px; }
.m-caret { margin-left: 11px; width: 0; height: 0; border: 6.500px solid transparent; border-top: 7px solid #ff4f9a; border-bottom: 0; }
.login { margin-left: auto; margin-right: 91px; }

.drop {
  margin: 99px 0 0 73px; width: 1400px; height: 188px; border: 2px dashed #d5d8dc; padding-top: 49px;
  display: flex; flex-direction: column; align-items: center;
}
.drop-btns { display: flex; gap: 6.500px; }
.circ { width: 50px; height: 50px; border-radius: 50%; background: #e6e8ea; display: flex; align-items: center; justify-content: center; }
.circ-ai { background: #f3bafd; }
.drag { margin-top: 18px; font-size: 16px; font-style: italic; line-height: 20px; }
.h1 { margin: 104px 0 0 60px; font-size: 50px; line-height: 60px; font-weight: 400; color: #333; }
.content-area { margin: 24px 0 0; font-size: 20px; line-height: 20px; color: #333; }

.navigator {
  position: absolute; left: 1208px; top: 126px; width: 300px; height: 439px; background: #fff; border-radius: 5px;
  box-shadow: 0 2px 15px rgba(0,0,0,.12); display: flex; flex-direction: column; overflow: hidden; font-size: 16px;
}
.nv-head { height: 45px; flex: none; display: flex; align-items: center; justify-content: space-between; padding: 8px 15px 0 13px; }
.nv-title { color: #0c0d0e; font-size: 16.5px; margin-top: -10px; }
.nv-row { height: 37px; display: flex; align-items: center; padding-left: 28px; }
.nv-row .caret { margin-right: 12px; }
.nv-ic { width: 18px; height: 12px; margin-right: 10px; }
.nv-top { height: 39px; background: #e6e8ea; padding-left: 16px; }
.nv-leaf { padding-left: 62px; }
.nv-lic { width: 18px; height: 14px; margin-right: 11px; }
.nv-group { border-bottom: 1px solid #e6e8ea; }
.nv-g1 .nv-row, .nv-g2 .nv-row:first-child, .nv-g3 .nv-row:first-child { box-shadow: inset -2px 0 0 #fff, inset -5px 0 0 #0c0d0e; }
.nv-g1 .nv-row:last-child { height: 38px; }
.nv-g3 { border-bottom: 0; }
.nv-foot { margin-top: auto; height: 18px; border-top: 1px solid #e6e8ea; display: flex; align-items: center; justify-content: center; }

.sharebar {
  position: absolute; right: 38px; bottom: 25px; width: 471px; height: 40px; background: #f9f9f9; border: 1px solid #aaa;
  display: flex; align-items: center; font: 13.8px "Open Sans", "Noto Sans", sans-serif; color: #15141a;
}
.grip {
  width: 5px; height: 22px; margin: 0 21px 0 7px;
  background: repeating-linear-gradient(#bbb 0 1px, transparent 1px 3px);
}
.share-t { margin-left: 13px; white-space: nowrap; width: 244px; }
.stop { width: 97px; height: 27px; background: #0b66e4; color: #fff; border-radius: 4px; display: flex; align-items: center; justify-content: center; font-size: 14px; }
.share-d { width: 1px; height: 24px; background: #ddd; margin: 0 12px 0 13px; }
.share-min { width: 25px; height: 25px; background: #e1e1e1; border-radius: 5px; position: relative; }
.share-min i { position: absolute; left: 7px; right: 6px; bottom: 4px; height: 2px; background: #333; }

/* taskbar */
.taskbar {
  flex: none; height: 60px; display: flex; align-items: center; position: relative; border-top: 1px solid #c9bdbd;
  background: linear-gradient(90deg, #f5e2dd 0%, #efdbe4 25%, #f3e1e2 50%, #f6e4dc 80%, #f7e4dc 100%);
  font: 14px "Open Sans", "Noto Sans", sans-serif; color: #1c1c1c;
}
.weather { width: 558px; flex: none; display: flex; align-items: center; padding-left: 26px; position: relative; }
.badge {
  position: absolute; left: 38px; top: -2px; width: 20px; height: 20px; border-radius: 50%; background: #c42b1c; color: #fff;
  font-size: 12px; display: flex; align-items: center; justify-content: center;
}
.w-t { display: flex; flex-direction: column; margin: -3px 0 0 10px; line-height: 21px; }
.w-h { color: #444; }
.tb-center { display: flex; align-items: center; }
.search {
  width: 273px; height: 38px; margin-left: 17px; border-radius: 19px; background: #fbf4f1; display: flex; align-items: center;
  padding-left: 13px; font-size: 16px; color: #333; box-shadow: 0 0 1px rgba(0,0,0,.3);
}
.search span { margin-left: 12px; }
.s-art { margin-left: auto; margin-right: 12px; }
.tv { margin-left: 17px; }
.app-ic { width: 55px; height: 60px; display: flex; align-items: center; justify-content: center; position: relative; flex: none; }
.app-ic u { position: absolute; left: 25px; bottom: 5px; width: 5px; height: 5px; border-radius: 50%; background: #777; }
.teams { margin-left: 14px; width: 52px; }
.t-t { font: 700 13px Roboto, sans-serif; fill: #5059c9; }
.t-badge {
  position: absolute; left: 26px; top: 9px; width: 17px; height: 20px; border-radius: 50%; background: #1267c4; color: #fff;
  font-size: 13px; display: flex; align-items: center; justify-content: center;
}
.dell { width: 55px; height: 60px; display: flex; align-items: center; justify-content: center; flex: none; }
.dell span { width: 32px; height: 32px; border: 2.500px solid #0c0c0c; border-radius: 50%; font: 700 8px "Liberation Sans", sans-serif; color: #0c0c0c; display: flex; align-items: center; justify-content: center; }
.ff-on { width: 48px; height: 48px; margin-left: 3px; background: #fbf1ee; border-radius: 4px; }
.ff-on b { position: absolute; left: 14px; bottom: 0; width: 20px; height: 4px; background: #0a6cc9; border-radius: 2px; }
.tray { margin-left: auto; display: flex; align-items: center; padding-right: 24px; }
.tr-mic { margin-left: 27px; }
.tr-lang { display: flex; flex-direction: column; align-items: center; margin: -3px 0 0 25px; line-height: 20px; width: 34px; }
.tr-wifi { margin-left: 19px; }
.tr-vol { margin-left: 11px; }
.tr-bat { margin-left: 11px; }
.clock { display: flex; flex-direction: column; align-items: flex-end; line-height: 20px; margin: -2px 0 0 10px; width: 88px; font-size: 13.5px; }
.tr-bell { margin-left: 10px; }
.copilot { margin-left: 21px; width: 30px; display: flex; flex-direction: column; align-items: center; }
.copilot span { margin-top: -6px; background: #f6b900; color: #222; font: 700 8px "Liberation Sans", sans-serif; width: 22px; height: 11px; border-radius: 2px; text-align: center; line-height: 11px; }
```
